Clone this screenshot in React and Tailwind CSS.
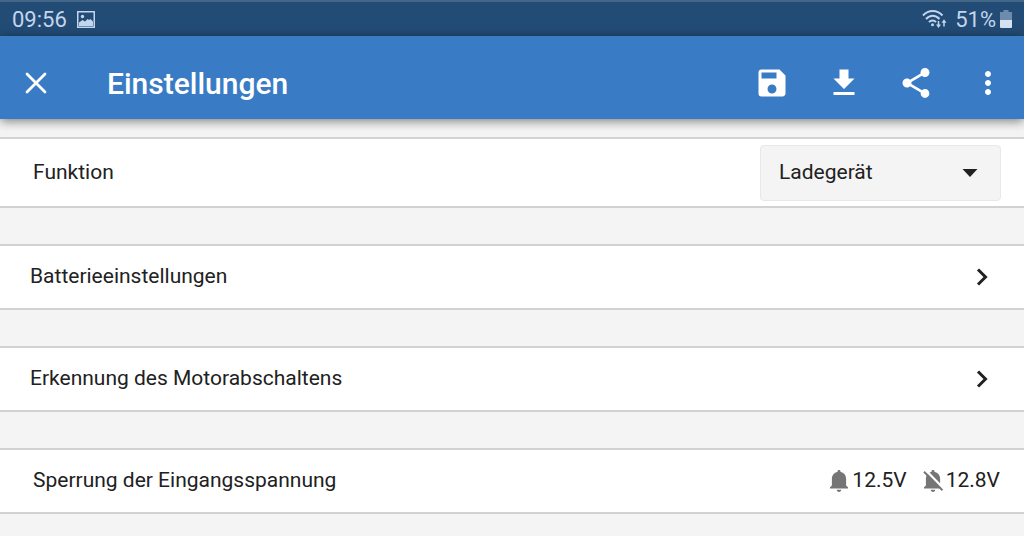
import { MdFileDownload, MdMoreVert, MdSave, MdShare } from "react-icons/md";

const actions = [
  { label: "Speichern", icon: MdSave },
  { label: "Herunterladen", icon: MdFileDownload },
  { label: "Teilen", icon: MdShare },
  { label: "Mehr", icon: MdMoreVert },
];

const PictureIcon = () => (
  <svg viewBox="0 0 18 17" className="w-[18px] h-[17px]" fill="none">
    <rect x="0.75" y="0.75" width="16.5" height="15.5" stroke="currentColor" strokeWidth="1.5" />
    <circle cx="5.5" cy="5.5" r="1.7" fill="currentColor" />
    <path d="M2 15v-3.500l3.500-2.500 2.500 1.500 2.500-2.500 1.500 1 1.500-1 2.500 2.500V15z" fill="currentColor" />
  </svg>
);

const WifiIcon = () => (
  <svg viewBox="0 0 25 20" className="w-[25px] h-5" fill="none" stroke="currentColor">
    <path d="M1 6.500c5.500-6 14-6 19.500 0" strokeWidth="2" />
    <path d="M4 10c4-4.300 9.500-4.300 13.500 0" strokeWidth="2" />
    <path d="M7 13.200c2-2.300 5-2.300 7 0" strokeWidth="2" />
    <circle cx="10.500" cy="15.700" r="1.500" fill="currentColor" stroke="none" />
    <path d="M16.500 12v5M22 17.500v-5" strokeWidth="1.500" />
    <path d="M14 15.500h5l-2.500 3.500zM19.500 13.700h5L22 10.200z" fill="currentColor" stroke="none" />
  </svg>
);

const BatteryIcon = () => (
  <svg viewBox="0 0 12 19" className="w-3 h-[19px]">
    <path d="M3.500 0h5v2H12v8H0V2h3.500z" fill="#6f8bab" />
    <path d="M0 10h12v7a1 1 0 0 1-1 1H1a1 1 0 0 1-1-1z" fill="#d5e2f2" />
  </svg>
);

const CloseIcon = () => (
  <svg viewBox="0 0 36 36" className="size-9" fill="none">
    <path d="M9 9l18 18M27 9L9 27" stroke="currentColor" strokeWidth="2.800" strokeLinecap="round" />
  </svg>
);

const ChevronIcon = () => (
  <svg viewBox="0 0 12 20" className="w-3 h-5" fill="none">
    <path d="M2 2.500l7.500 7.500L2 17.500" stroke="currentColor" strokeWidth="3" />
  </svg>
);

const BellIcon = ({ off }) => (
  <svg viewBox="0 0 20 24" className="w-5 h-6 text-[#757575]">
    <path
      d="M10 1c.9 0 1.500.6 1.500 1.400v.5c3.400.7 5.600 3.300 5.600 6.600v7l1.900 1.700v1.300H1v-1.300l1.900-1.700v-7c0-3.300 2.200-5.900 5.600-6.600v-.5C8.500 1.600 9.100 1 10 1z"
      fill="currentColor"
    />
    <path d="M7.700 20.800h4.600c0 1.200-1 2.100-2.300 2.100s-2.300-.9-2.300-2.100z" fill="currentColor" />
    {off && (
      <>
        <path d="M2.500 1l18 18.500" stroke="#fff" strokeWidth="2.500" />
        <path d="M1 2.800l18.500 18.500" stroke="currentColor" strokeWidth="2" />
      </>
    )}
  </svg>
);

const LinkRow = ({ title }) => (
  <button className="flex h-[66px] w-full items-center justify-between border-y-2 border-[#d2d2d2] bg-white pl-[30px] pr-9 text-left">
    <span>{title}</span>
    <ChevronIcon />
  </button>
);

const App = () => {
  return (
    <div className="min-h-screen bg-[#f4f4f4] font-['Roboto',sans-serif] text-[21px] text-[#212121]">
      <div className="flex h-9 items-center justify-between border-t-2 border-[#446687] bg-[#224b75] px-3 text-[22px] text-[#c3d6ed]">
        <div className="flex items-center gap-2.5">
          <span>09:56</span>
          <PictureIcon />
        </div>
        <div className="flex items-center">
          <WifiIcon />
          <span className="ml-2 mr-1">51%</span>
          <BatteryIcon />
        </div>
      </div>

      <header className="relative flex h-[83px] items-center bg-[#397cc5] pt-[11px] px-[18px] text-white shadow-[0_2px_10px_rgba(0,0,0,0.5)]">
        <button aria-label="Schließen">
          <CloseIcon />
        </button>
        <h1 className="ml-[53px] flex-1 text-[30px] font-medium">Einstellungen</h1>
        <div className="flex gap-9">
          {actions.map(({ label, icon: Icon }) => (
            <button key={label} aria-label={label}>
              <Icon className="size-9" />
            </button>
          ))}
        </div>
      </header>

      <main className="flex flex-col gap-9 pt-[18px]">
        <div className="flex h-[71px] items-center justify-between border-y-2 border-[#d2d2d2] bg-white pl-[33px] pr-[23px]">
          <label htmlFor="funktion">Funktion</label>
          <div className="relative">
            <select
              id="funktion"
              className="block h-14 w-[241px] appearance-none rounded border border-[#e8e8e8] bg-[#f4f4f4] pl-[18px] pr-12"
            >
              <option>Ladegerät</option>
            </select>
            <svg
              viewBox="0 0 16 8"
              className="pointer-events-none absolute right-[23px] top-6 h-2 w-4"
              fill="currentColor"
            >
              <path d="M0.500 0h15L8 8z" />
            </svg>
          </div>
        </div>

        <LinkRow title="Batterieeinstellungen" />
        <LinkRow title="Erkennung des Motorabschaltens" />

        <div className="flex h-[66px] items-center justify-between border-y-2 border-[#d2d2d2] bg-white pl-[33px] pr-6">
          <span>Sperrung der Eingangsspannung</span>
          <div className="flex items-center gap-4">
            <span className="flex items-center gap-[3px]">
              <BellIcon />
              12.5V
            </span>
            <span className="flex items-center gap-[3px]">
              <BellIcon off />
              12.8V
            </span>
          </div>
        </div>
      </main>
    </div>
  );
};

export default App;
